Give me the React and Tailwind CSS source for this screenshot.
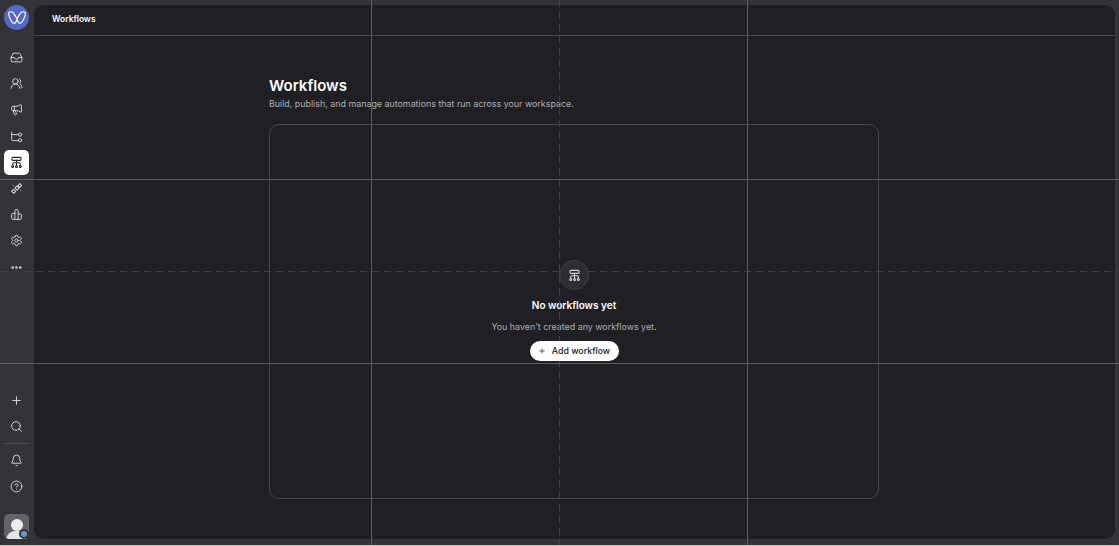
import { Plus, Search, Bell, CircleHelp, Settings, Ellipsis, Inbox, UsersRound, Megaphone } from "lucide-react";

const FlowIcon = ({ className }) => (
  <svg viewBox="0 0 24 24" fill="none" stroke="currentColor" strokeWidth="2" strokeLinecap="round" strokeLinejoin="round" className={className}>
    <rect x="3.500" y="2.500" width="17" height="5.500" rx="2" />
    <path d="M12 8v9M12 12.500H7a2 2 0 0 0-2 2V17M12 12.500h5a2 2 0 0 1 2 2V17" />
    <circle cx="5" cy="19.500" r="1.800" />
    <circle cx="12" cy="19.500" r="1.800" />
    <circle cx="19" cy="19.500" r="1.800" />
  </svg>
);

const BranchIcon = ({ className }) => (
  <svg viewBox="0 0 24 24" fill="none" stroke="currentColor" strokeWidth="1.8" strokeLinecap="round" strokeLinejoin="round" className={className}>
    <path d="M3 4v14a1.500 1.500 0 0 0 1.500 1.500H15" />
    <path d="M3 8.500h12" />
    <circle cx="18.500" cy="8.500" r="3" />
    <circle cx="18.500" cy="19" r="3" />
  </svg>
);

const SparkIcon = ({ className }) => (
  <svg viewBox="0 0 24 24" fill="none" stroke="currentColor" strokeWidth="2" strokeLinecap="round" strokeLinejoin="round" className={className}>
    <path d="M6.500 13.500l4 4-3.500 3.500-4-4zM12.500 7.500l4 4-3.500 3.500-4-4zM18 3l3.500 3.500L18 10l-3.500-3.500z" />
    <path d="M7 6h.01M20 15h.01" />
  </svg>
);

const BuildingIcon = ({ className }) => (
  <svg viewBox="0 0 24 24" fill="none" stroke="currentColor" strokeWidth="1.8" strokeLinecap="round" strokeLinejoin="round" className={className}>
    <path d="M9 21V5a2 2 0 0 1 2-2h2a2 2 0 0 1 2 2v16" />
    <path d="M9 10H5a2 2 0 0 0-2 2v7a2 2 0 0 0 2 2h14a2 2 0 0 0 2-2v-6a2 2 0 0 0-2-2h-4" />
  </svg>
);

const Logo = () => (
  <div className="flex h-[25px] w-[25px] items-center justify-center rounded-full bg-[#5468c4]">
    <svg viewBox="0 0 24 24" fill="none" stroke="#ffffff" strokeWidth="1.400" strokeLinejoin="round" className="h-[20px] w-[20px]">
      <path d="M2 6.500C2 5 3.200 4.500 4.500 4.500c2 0 3 .6 4 2.500L12 13l3.500-6c1-1.900 2-2.500 4-2.500 1.300 0 2.500.5 2.500 2 0 3-3.500 12-6.500 12-1.300 0-2-.8-3.500-5-1.500 4.200-2.200 5-3.500 5C5.500 18.500 2 9.500 2 6.500z" />
    </svg>
  </div>
);

const NavIcon = ({ icon: Icon, active, stroke }) => (
  <button className={"flex h-[25px] w-[25px] items-center justify-center rounded-[5px] " + (active ? "bg-white text-[#27272c]" : "text-[#d4d4d8]")}>
    <Icon className="h-[13px] w-[13px]" strokeWidth={stroke || 1.8} />
  </button>
);

export default function App() {
  return (
    <div className="relative flex h-[546px] w-[1119px] overflow-hidden border-b border-[#c4c4c6] bg-[#333338] font-['Inter',sans-serif]">
      {/* Sidebar */}
      <aside className="flex w-[34px] shrink-0 flex-col items-start pb-[6px] pl-[4px] pt-[5px]">
        <Logo />
        <div className="flex flex-col gap-[1.2px] pt-[15px]">
          <NavIcon icon={Inbox} />
          <NavIcon icon={UsersRound} />
          <NavIcon icon={Megaphone} />
          <NavIcon icon={BranchIcon} />
          <NavIcon icon={FlowIcon} active />
          <NavIcon icon={SparkIcon} />
          <NavIcon icon={BuildingIcon} />
          <NavIcon icon={Settings} />
          <NavIcon icon={Ellipsis} stroke={3} />
        </div>
        <div className="mt-auto flex flex-col items-center">
          <NavIcon icon={Plus} />
          <div className="mt-[1px]"><NavIcon icon={Search} /></div>
          <div className="my-[4px] h-px w-[25px] bg-[#4a4a50]" />
          <NavIcon icon={Bell} />
          <div className="mt-[1px]"><NavIcon icon={CircleHelp} /></div>
          <div className="relative mt-[15px] h-[25px] w-[25px] overflow-hidden rounded-[5px] bg-[#63636a]">
            <div className="mx-auto mt-[5px] h-[12px] w-[12px] rounded-full bg-[#ececec]" />
            <div className="mx-auto mt-[0px] h-[9px] w-[21px] rounded-t-full bg-[#e4e4e4]" />
            <div className="absolute bottom-0 right-0 h-[10px] w-[10px] rounded-full border-2 border-[#333338] bg-[#5f9bd0]" />
          </div>
        </div>
      </aside>

      {/* Main panel */}
      <main className="mb-[6px] mr-[4px] mt-[5px] flex flex-1 flex-col rounded-[10px] bg-[#202024]">
        <header className="flex h-[31px] shrink-0 items-center border-b border-[#47474c] pb-[2px] pl-[18px] text-[8.4px] font-semibold text-white">
          Workflows
        </header>
        <div className="flex flex-1 justify-center pr-[1px] pt-[40px]">
          <div className="flex w-[610px] flex-col">
            <h1 className="text-[15px] font-semibold leading-[20px] text-white">Workflows</h1>
            <p className="mt-[1px] text-[8.9px] leading-[14px] text-[#adadb5]">
              Build, publish, and manage automations that run across your workspace.
            </p>
            <div className="mt-[13px] flex h-[375px] flex-col items-center rounded-[10px] border border-[#47474c] pt-[135px]">
              <div className="relative z-10 flex h-[30px] w-[30px] items-center justify-center rounded-full border border-[#3f3f45] bg-[#2d2d32] text-[#d4d4d8]">
                <FlowIcon className="h-[13px] w-[13px]" />
              </div>
              <p className="mt-[8px] text-[10px] font-semibold leading-[14px] text-white">No workflows yet</p>
              <p className="mt-[8px] text-[8.9px] leading-[14px] text-[#adadb5]">You haven't created any workflows yet.</p>
              <button className="relative z-10 mt-[7px] flex h-[20px] w-[89px] items-center justify-center gap-[6px] rounded-full bg-white text-[8.8px] font-medium text-[#202024]">
                <Plus className="h-[8px] w-[8px]" strokeWidth={2} />
                Add workflow
              </button>
            </div>
          </div>
        </div>
      </main>

      {/* Guide lines over the page */}
      <div className="pointer-events-none absolute bottom-0 left-[371px] top-0 w-px bg-[#5c5c61]" />
      <div className="pointer-events-none absolute bottom-0 left-[747px] top-0 w-px bg-[#5c5c61]" />
      <div className="pointer-events-none absolute bottom-0 left-[559px] top-0 w-px bg-[repeating-linear-gradient(to_bottom,#2d3e88_0,#2d3e88_7px,transparent_7px,transparent_12px)]" />
      <div className="pointer-events-none absolute left-0 right-0 top-[179px] h-px bg-[#5c5c61]" />
      <div className="pointer-events-none absolute left-0 right-0 top-[363px] h-px bg-[#5c5c61]" />
      <div className="pointer-events-none absolute left-0 right-0 top-[271px] h-px bg-[repeating-linear-gradient(to_right,#2d3e88_0,#2d3e88_7px,transparent_7px,transparent_12px)]" />
    </div>
  );
}
